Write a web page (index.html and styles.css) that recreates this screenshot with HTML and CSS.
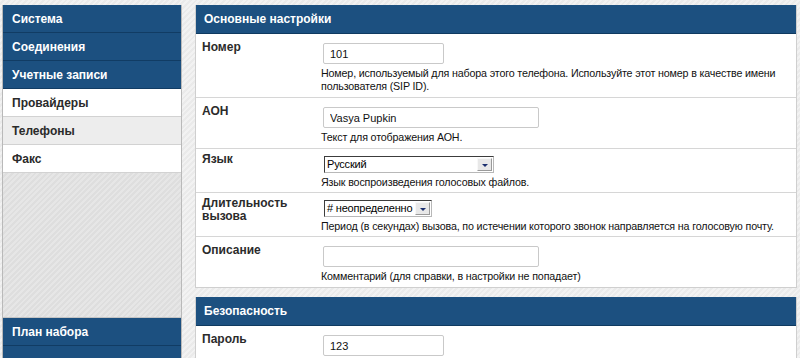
FILE: index.html
```html
<!doctype html>
<html lang="ru">
  <head>
    <meta charset="UTF-8" />
    <title>Телефоны</title>
    <link rel="stylesheet" href="styles.css">
  </head>
  <body>
    <div class="page">
      <div class="menu">
        <a class="menu-item section">Система</a>
        <a class="menu-item section">Соединения</a>
        <a class="menu-item section">Учетные записи</a>
        <a class="menu-item sub">Провайдеры</a>
        <a class="menu-item sub alt">Телефоны</a>
        <a class="menu-item sub">Факс</a>
        <div class="menu-fill"></div>
        <a class="menu-item section">План набора</a>
        <a class="menu-item section">&nbsp;</a>
      </div>

      <div class="content">
        <div class="panel">
          <h2>Основные настройки</h2>

          <div class="row">
            <div class="label">Номер</div>
            <div class="value">
              <input type="text" class="field short" value="101" />
              <div class="hint">Номер, используемый для набора этого телефона. Используйте этот номер в качестве имени пользователя (SIP ID).</div>
            </div>
          </div>

          <div class="row">
            <div class="label">АОН</div>
            <div class="value">
              <input type="text" class="field long" value="Vasya Pupkin" />
              <div class="hint">Текст для отображения АОН.</div>
            </div>
          </div>

          <div class="row compact">
            <div class="label">Язык</div>
            <div class="value">
              <div class="select wide">
                <span class="select-text">Русский</span>
                <span class="select-btn"></span>
              </div>
              <div class="hint">Язык воспроизведения голосовых файлов.</div>
            </div>
          </div>

          <div class="row compact">
            <div class="label">Длительность вызова</div>
            <div class="value">
              <div class="select narrow">
                <span class="select-text"># неопределенно</span>
                <span class="select-btn"></span>
              </div>
              <div class="hint">Период (в секундах) вызова, по истечении которого звонок направляется на голосовую почту.</div>
            </div>
          </div>

          <div class="row">
            <div class="label">Описание</div>
            <div class="value">
              <input type="text" class="field long" value="" />
              <div class="hint">Комментарий (для справки, в настройки не попадает)</div>
            </div>
          </div>
        </div>

        <div class="panel">
          <h2>Безопасность</h2>
          <div class="row">
            <div class="label">Пароль</div>
            <div class="value">
              <input type="text" class="field short" value="123" />
            </div>
          </div>
        </div>
      </div>
    </div>
  </body>
</html>
```

FILE: styles.css
```css
html,
body {
  margin: 0;
  height: 100%;
  overflow: hidden;
}
body {
  font-family: "Liberation Sans", Arial, sans-serif;
  font-size: 11px;
  color: #222;
  background: repeating-linear-gradient(
    135deg,
    #f2f2f2 0px,
    #f2f2f2 2px,
    #eaeaea 2px,
    #eaeaea 4px
  );
}
.page {
  display: flex;
  gap: 13px;
  padding: 5px 3px 0 2px;
}

/* left menu */
.menu {
  width: 180px;
  flex-shrink: 0;
  display: flex;
  flex-direction: column;
  border-left: 1px solid #b9b9b9;
  border-right: 1px solid #b9b9b9;
  box-sizing: border-box;
}
.menu-item {
  display: block;
  height: 28px;
  line-height: 28px;
  padding-left: 9px;
  font-size: 12px;
  font-weight: bold;
  box-sizing: border-box;
  cursor: pointer;
}
.menu-item.section {
  background: #1c5080;
  color: #fff;
  border-bottom: 1px solid #113c64;
}
.menu-item.sub {
  background: #fff;
  color: #2a2a2a;
  border-bottom: 1px solid #d2d2d2;
}
.menu-item.sub.alt {
  background: #ededed;
}
.menu-fill {
  height: 144px;
  background: repeating-linear-gradient(
    135deg,
    #e6e6e6 0px,
    #e6e6e6 2px,
    #dedede 2px,
    #dedede 4px
  );
  border-bottom: 1px solid #c4c4c4;
}

/* main panels */
.content {
  flex: 1;
}
.panel {
  background: #fff;
  border: 1px solid #cfcfcf;
  border-top: none;
  margin-bottom: 9px;
}
.panel h2 {
  margin: 0;
  height: 28px;
  line-height: 29px;
  padding-left: 8px;
  font-size: 12px;
  color: #fff;
  background: #1c5080;
  border-bottom: 1px solid #0f3a60;
}
.row {
  display: grid;
  grid-template-columns: 119px 1fr;
  padding: 9px 6px 4px;
  border-top: 1px solid #d6d6d6;
}
.panel h2 + .row {
  border-top: none;
}
.row.compact {
  padding-top: 6px;
  padding-bottom: 3px;
}
.label {
  font-size: 12px;
  font-weight: bold;
  color: #2b2b2b;
  line-height: 13px;
  margin-top: -2px;
  padding-right: 30px;
}
.hint {
  font-size: 10.7px;
  letter-spacing: -0.15px;
  line-height: 13px;
  height: auto;
  margin-top: 3px;
  color: #111;
}

.field {
  display: block;
  margin: 0 0 0 2px;
  height: 21px;
  box-sizing: border-box;
  border: 1px solid #c9c9c9;
  border-radius: 2px;
  padding: 1px 6px 0;
  font-family: "Liberation Sans", Arial, sans-serif;
  font-size: 11px;
  color: #111;
  background: #fff;
}
.field.short {
  width: 121px;
}
.field.long {
  width: 216px;
}

.select {
  display: flex;
  margin: 1px 0 0 3px;
  height: 17px;
  box-sizing: border-box;
  border: 1px solid #3c3c3c;
  border-right-color: #b8b8b8;
  border-bottom-color: #b8b8b8;
  background: #fff;
}
.select.wide {
  width: 170px;
}
.select.narrow {
  width: 108px;
}
.select-text {
  flex: 1;
  padding-left: 2px;
  line-height: 15px;
  font-size: 11px;
  letter-spacing: -0.2px;
  color: #000;
  white-space: nowrap;
  overflow: hidden;
}
.select-btn {
  position: relative;
  width: 13px;
  margin: 1px;
  background: #e8e8e8;
  border: 1px solid #9a9a9a;
  border-top-color: #f8f8f8;
  border-left-color: #f8f8f8;
}
.select-btn::after {
  content: "";
  position: absolute;
  left: 4px;
  top: 5px;
  border-left: 3px solid transparent;
  border-right: 3px solid transparent;
  border-top: 3px solid #1b2f6e;
}
```
